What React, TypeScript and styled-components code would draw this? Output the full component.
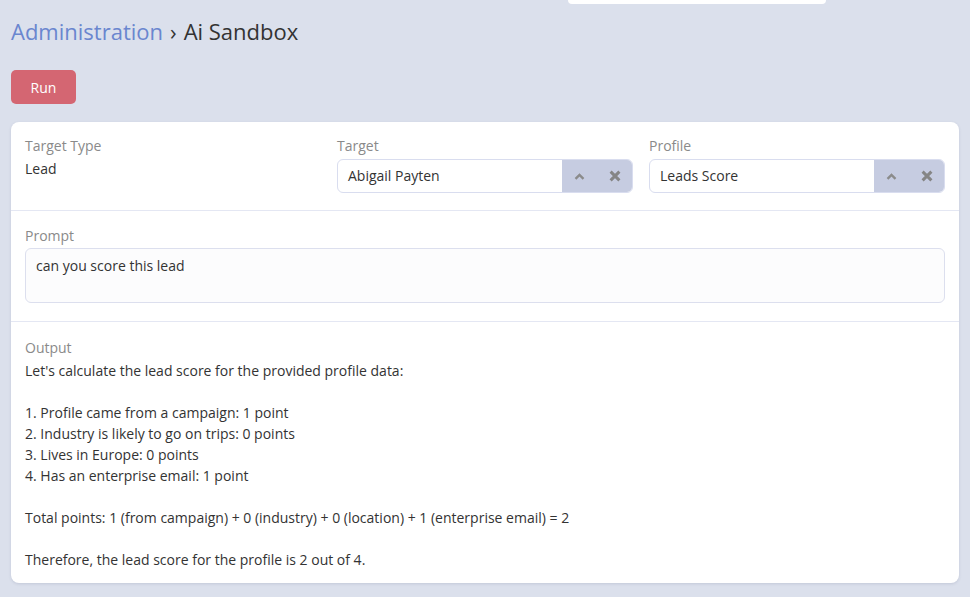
import React from 'react';
import styled, { createGlobalStyle } from 'styled-components';

const GlobalStyle = createGlobalStyle`
  html, body {
    margin: 0;
    padding: 0;
    background: #dbe0ec;
  }
  body {
    font-family: 'Open Sans', 'Liberation Sans', sans-serif;
    color: #333;
  }
`;

const Page = styled.div`
  position: relative;
  min-height: 597px;
  padding: 14px 11px 14px 11px;
  box-sizing: border-box;
`;

const TopMenu = styled.div`
  position: absolute;
  top: 0;
  left: 568px;
  width: 258px;
  height: 4px;
  background: #fff;
  border-radius: 0 0 5px 5px;
`;

const Breadcrumb = styled.h1`
  margin: 0;
  font-size: 22px;
  font-weight: 400;
  line-height: 34px;
  color: #333;
`;

const Crumb = styled.a`
  color: #6a86cf;
  text-decoration: none;
`;

const Sep = styled.span`
  margin: 0 7px;
`;

const RunButton = styled.button`
  margin-top: 22px;
  width: 65px;
  height: 34px;
  border: none;
  border-radius: 5px;
  background: #d46672;
  color: #fff;
  font-family: inherit;
  font-size: 14px;
`;

const Card = styled.div`
  margin-top: 18px;
  background: #fff;
  border-radius: 8px;
  box-shadow: 0 1px 3px rgba(60, 70, 110, 0.15);
`;

const Section = styled.div<{ $top?: number; $bottom?: number; $border?: boolean }>`
  padding: ${(p) => p.$top ?? 13}px 14px ${(p) => p.$bottom ?? 17}px;
  border-bottom: ${(p) => (p.$border ? '1px solid #e4e7f3' : 'none')};
`;

const Grid = styled.div`
  display: grid;
  grid-template-columns: repeat(3, 1fr);
  gap: 16px;
`;

const Label = styled.div`
  font-size: 14px;
  line-height: 21px;
  color: #8a8a8a;
  margin-bottom: 2px;
`;

const Value = styled.div`
  font-size: 14px;
  line-height: 21px;
`;

const Select = styled.div`
  display: flex;
  height: 34px;
  margin-top: 3px;
  border: 1px solid #d9ddef;
  border-radius: 6px;
  overflow: hidden;
  box-sizing: border-box;
`;

const SelectValue = styled.div`
  flex: 1;
  padding: 0 10px;
  font-size: 14px;
  line-height: 31px;
`;

const SelectButtons = styled.div`
  display: flex;
  width: 70px;
  background: #c6cce1;
`;

const IconButton = styled.span`
  flex: 1;
  display: flex;
  align-items: center;
  justify-content: center;
`;

const Prompt = styled.div`
  height: 55px;
  box-sizing: border-box;
  border: 1px solid #dcdfee;
  border-radius: 6px;
  background: #fcfcfd;
  padding: 6px 10px;
  font-size: 14px;
  line-height: 21px;
`;

const Output = styled.div`
  font-size: 14px;
  line-height: 21px;
  white-space: pre-wrap;
`;

const ChevronUp = () => (
  <svg width="11" height="7" viewBox="0 0 11 7">
    <path d="M1.5 5.8 L5.5 2 L9.5 5.8" fill="none" stroke="#8b8b8b" strokeWidth="2.4" />
  </svg>
);

const Cross = () => (
  <svg width="12" height="12" viewBox="0 0 12 12">
    <path d="M1.6 1.6 L10.4 10.4 M10.4 1.6 L1.6 10.4" fill="none" stroke="#858585" strokeWidth="3" />
  </svg>
);

const SelectField = ({ label, value }: { label: string; value: string }) => (
  <div>
    <Label>{label}</Label>
    <Select>
      <SelectValue>{value}</SelectValue>
      <SelectButtons>
        <IconButton>
          <ChevronUp />
        </IconButton>
        <IconButton>
          <Cross />
        </IconButton>
      </SelectButtons>
    </Select>
  </div>
);

const outputText = `Let's calculate the lead score for the provided profile data:

1. Profile came from a campaign: 1 point
2. Industry is likely to go on trips: 0 points
3. Lives in Europe: 0 points
4. Has an enterprise email: 1 point

Total points: 1 (from campaign) + 0 (industry) + 0 (location) + 1 (enterprise email) = 2

Therefore, the lead score for the profile is 2 out of 4.`;

const App = (): JSX.Element => {
  return (
    <Page>
      <GlobalStyle />
      <TopMenu />
      <Breadcrumb>
        <Crumb href="#">Administration</Crumb>
        <Sep>›</Sep>
        Ai Sandbox
      </Breadcrumb>
      <RunButton>Run</RunButton>

      <Card>
        <Section $border>
          <Grid>
            <div>
              <Label>Target Type</Label>
              <Value>Lead</Value>
            </div>
            <SelectField label="Target" value="Abigail Payten" />
            <SelectField label="Profile" value="Leads Score" />
          </Grid>
        </Section>

        <Section $border $top={14} $bottom={18}>
          <Label>Prompt</Label>
          <Prompt>can you score this lead</Prompt>
        </Section>

        <Section $top={15} $bottom={13}>
          <Label>Output</Label>
          <Output>{outputText}</Output>
        </Section>
      </Card>
    </Page>
  );
};

export default App;
